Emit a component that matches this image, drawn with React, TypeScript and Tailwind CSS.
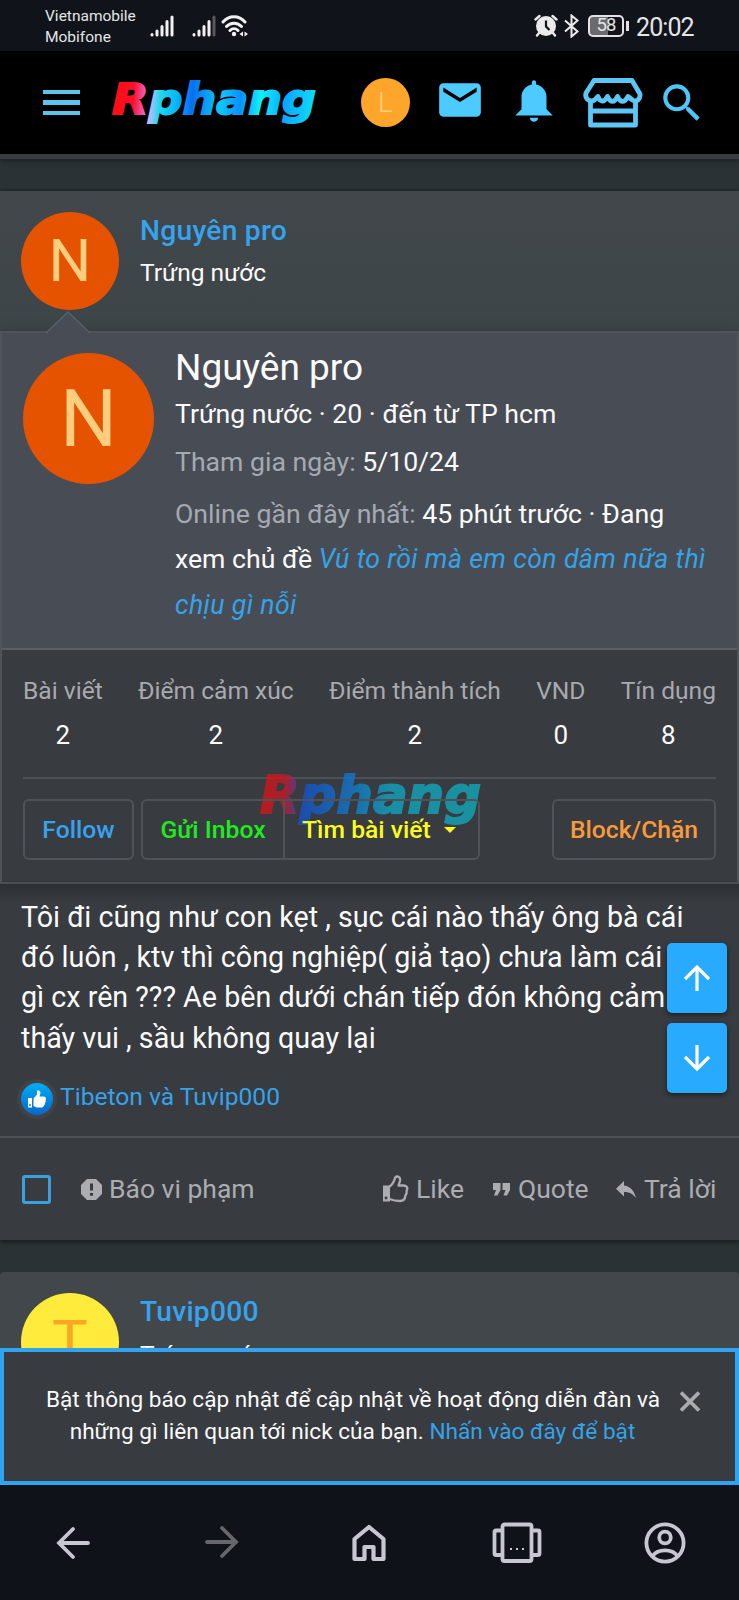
import type { ReactNode } from "react";
import { MdMail } from "react-icons/md";

const stats = [
  { label: "Bài viết", value: "2" },
  { label: "Điểm cảm xúc", value: "2" },
  { label: "Điểm thành tích", value: "2" },
  { label: "VND", value: "0" },
  { label: "Tín dụng", value: "8" },
];

function Signal({ weak }: { weak?: boolean }) {
  return (
    <svg width="24" height="22" viewBox="0 0 24 22" stroke="#f1f1f1" strokeWidth="3" strokeLinecap="round">
      <path d="M2 20V19.500M7 20V16M12 20V11.500M17 20V6.500" />
      <path d="M22 20V2" stroke={weak ? "#55585c" : "#f1f1f1"} />
    </svg>
  );
}

function StatusBar() {
  return (
    <div className="flex h-[51px] items-center bg-[#10141a] text-[#e4e5e7]">
      <div className="ml-[45px] mt-[3px] w-[105px] whitespace-nowrap text-[15.5px] leading-[21.5px]">
        <div>Vietnamobile</div>
        <div>Mobifone</div>
      </div>
      <Signal />
      <div className="ml-[18px]">
        <Signal weak />
      </div>
      <svg className="ml-[5px]" width="28" height="24" viewBox="0 0 28 24" fill="none" stroke="#f1f1f1" strokeWidth="3" strokeLinecap="round">
        <path d="M2 8C8 1 18 1 24 8M5.500 12.500C9.500 8 16.500 8 20.500 12.500M9 16.500C11.500 14 14.500 14 17 16.500" />
        <circle cx="13" cy="20" r="2.200" fill="#f1f1f1" stroke="none" />
        <path d="M22 17.500V22.500L18.500 20ZM23.500 17.500V22.500L27 20Z" fill="#f1f1f1" stroke="none" />
      </svg>
      <svg className="ml-auto" width="24" height="24" viewBox="0 0 24 24">
        <circle cx="12" cy="12" r="10" fill="#ebebeb" />
        <path d="M1.500 5.500L5.500 2M18.500 2L22.500 5.500M5 19L3 21.500M19 19L21 21.500" stroke="#ebebeb" strokeWidth="2.400" strokeLinecap="round" />
        <path d="M12 6.500V12.500L15.500 16" stroke="#10141a" strokeWidth="2.200" fill="none" />
      </svg>
      <svg className="ml-[5px]" width="17" height="24" viewBox="0 0 17 24" fill="none" stroke="#ebebeb" strokeWidth="2">
        <path d="M2 6.500L14.500 17.500L8.500 22.500V1.500L14.500 6.500L2 17.500" />
      </svg>
      <div className="ml-[8px] flex h-[22px] w-[36px] items-center justify-center rounded-[5px] border-2 border-[#e4e0e4] bg-linear-to-r from-[#6b6b6d] from-55% to-[#10141a] to-55% text-[18.5px] leading-none tracking-[-0.8px]">
        58
      </div>
      <div className="ml-[2px] h-[10px] w-[3px] bg-[#e4e0e4]" />
      <div className="ml-[7px] mr-[47px] mt-[3px] w-[56px] whitespace-nowrap text-[25px] leading-none tracking-[-0.9px]">20:02</div>
    </div>
  );
}

function SiteHeader() {
  return (
    <header className="flex h-[103px] items-center bg-black">
      <div className="ml-[43px] flex w-[37px] flex-col gap-[6px]">
        <div className="h-[4.500px] bg-[#5bc3ec]" />
        <div className="h-[4.500px] bg-[#5bc3ec]" />
        <div className="h-[4.500px] bg-[#5bc3ec]" />
      </div>
      <svg className="ml-[30px] mt-px overflow-visible" width="210" height="56" viewBox="0 0 210 56">
        <defs>
          <linearGradient id="logo" gradientUnits="userSpaceOnUse" x1="3" y1="0" x2="204" y2="14">
            <stop offset="0" stopColor="#ff0b10" />
            <stop offset="0.110" stopColor="#ff1028" />
            <stop offset="0.160" stopColor="#ee55b8" />
            <stop offset="0.190" stopColor="#c9b9ff" />
            <stop offset="0.240" stopColor="#20d8ee" />
            <stop offset="0.320" stopColor="#08b8f8" />
            <stop offset="0.400" stopColor="#0870f0" />
            <stop offset="0.540" stopColor="#10c8f8" />
            <stop offset="0.640" stopColor="#0890ff" />
            <stop offset="0.740" stopColor="#10f0f8" />
            <stop offset="0.860" stopColor="#08a8ff" />
            <stop offset="1" stopColor="#10d8f8" />
          </linearGradient>
        </defs>
        <text x="2" y="39" fill="url(#logo)" stroke="url(#logo)" strokeWidth="2" fontFamily="DejaVu Sans" fontStyle="italic" fontWeight="700" fontSize="43" textLength="204" lengthAdjust="spacingAndGlyphs">
          Rphang
        </text>
      </svg>
      <div className="ml-[41px] flex size-[49px] items-center justify-center rounded-full bg-[#fea62b] text-[28px] font-light text-[#ffd27c]">L</div>
      <MdMail className="-mt-[5px] ml-[25px] size-[50px] text-[#4dcaff]" />
      <svg className="-mt-[3px] ml-[24px] size-[50px]" viewBox="0 0 24 24" fill="#4dcaff">
        <path d="M14 20a2 2 0 0 1-4 0h4M12 2a1 1 0 0 1 1 1v1.080c2.840.48 5 2.950 5 5.920v6l3 3H3l3-3v-6c0-2.970 2.160-5.440 5-5.920V3a1 1 0 0 1 1-1Z" />
      </svg>
      <svg className="ml-[24px]" width="60" height="50" viewBox="0 0 60 50" fill="none" stroke="#5cc6f5" strokeWidth="4.800" strokeLinejoin="round">
        <path d="M11 2.500H49L57 16C57.500 21 54 24.500 49.500 22L45 18.500C41.500 25 37.500 25 34.500 18.500C31.500 25 27.500 25 24.500 18.500C21 25 17 24 15 18.500C11 24 8 23.500 5.500 22C2.500 20 2.500 17 3 15Z" />
        <path d="M7.500 22V47H52.500V22M7.500 33H52.500" />
      </svg>
      <svg className="ml-[14px] size-[50px]" viewBox="0 0 24 24" fill="#4fc6f8">
        <path d="M9.500 3A6.500 6.500 0 0 1 16 9.500c0 1.610-.59 3.090-1.560 4.230l.27.27h.79l5 5-1.500 1.500-5-5v-.79l-.27-.27A6.516 6.516 0 0 1 9.500 16a6.500 6.500 0 0 1 0-13m0 2C7 5 5 7 5 9.500S7 14 9.500 14 14 12 14 9.500 12 5 9.500 5Z" />
      </svg>
    </header>
  );
}

function ProfileCard() {
  return (
    <div className="relative h-[553px] border-2 border-[#505458] bg-[#383b40] shadow-[0_4px_14px_rgba(0,0,0,0.35)]">
      {/* pointer towards the avatar above */}
      <svg className="absolute -top-[22px] left-[43px]" width="46" height="23" viewBox="0 0 46 23">
        <path d="M1 22L23 1L45 22V23H1Z" fill="#484d55" />
        <path d="M1 22L23 1L45 22" fill="none" stroke="#596068" strokeWidth="1.500" />
      </svg>
      <div className="flex h-[317px] border-b-2 border-[#5b5f64] bg-[#484d55] pl-[21px] pt-[20px]">
        <div className="flex size-[131px] shrink-0 items-center justify-center rounded-full bg-[#e55300] text-[80px] text-[#ffcd7e]">N</div>
        <div className="ml-[21px] -mt-[9px] whitespace-nowrap text-[26.65px] text-[#fafafa]">
          <div className="h-[46px] text-[37px] leading-[48px]">Nguyên pro</div>
          <div className="h-[48px] leading-[48px]">Trứng nước · 20 · đến từ TP hcm</div>
          <div className="h-[53.5px] leading-[48px]">
            <span className="text-[#a4a9b2]">Tham gia ngày:</span> 5/10/24
          </div>
          <div className="leading-[45.5px]">
            <span className="text-[#a4a9b2]">Online gần đây nhất:</span> 45 phút trước · Đang
            <br />
            xem chủ đề <span className="italic tracking-[0.38px] text-[#36a3e8]">Vú to rồi mà em còn dâm nữa thì</span>
            <br />
            <span className="italic tracking-[0.38px] text-[#36a3e8]">chịu gì nỗi</span>
          </div>
        </div>
      </div>
      <div className="mx-[21px] flex h-[129px] justify-between border-b-2 border-[#4d5055] pt-[19px] text-center">
        {stats.map((s) => (
          <div key={s.label} className="whitespace-nowrap">
            <div className="text-[24.6px] leading-[44px] text-[#a8aaae]">{s.label}</div>
            <div className="text-[26px] leading-[44px] text-[#fafafa]">{s.value}</div>
          </div>
        ))}
      </div>
      <svg className="absolute left-[256px] top-[434px] overflow-visible" width="226" height="66" viewBox="0 0 226 66" opacity="0.800">
        <defs>
          <linearGradient id="watermark" gradientUnits="userSpaceOnUse" x1="2" y1="0" x2="222" y2="14">
            <stop offset="0" stopColor="#d81418" />
            <stop offset="0.120" stopColor="#c41a24" />
            <stop offset="0.170" stopColor="#65398a" />
            <stop offset="0.200" stopColor="#1552c8" />
            <stop offset="0.420" stopColor="#1278cc" />
            <stop offset="0.600" stopColor="#12a4c0" />
            <stop offset="1" stopColor="#12a8b8" />
          </linearGradient>
        </defs>
        <text x="2" y="46" fill="url(#watermark)" stroke="url(#watermark)" strokeWidth="2" fontFamily="DejaVu Sans" fontStyle="italic" fontWeight="700" fontSize="51" textLength="221" lengthAdjust="spacingAndGlyphs">
          Rphang
        </text>
      </svg>
      <div className="relative mx-[21px] mt-[20px] flex h-[61px] text-[24.7px] font-medium leading-[36px]">
        <div className="flex w-[111px] items-center justify-center rounded-[6px] border-2 border-[#4f5257] text-[#36a3ee]">Follow</div>
        <div className="ml-[7px] flex w-[144px] items-center justify-center rounded-l-[6px] border-2 border-[#4f5257] text-[#1fec1f]">Gửi Inbox</div>
        <div className="flex w-[195px] items-center whitespace-nowrap rounded-r-[6px] border-2 border-l-0 border-[#4f5257] pl-[17px] text-[#fcfc1c]">
          Tìm bài viết
          <span className="ml-[13px] border-x-[6px] border-t-[6px] border-x-transparent border-t-[#fcfc1c]" />
        </div>
        <div className="ml-auto flex w-[164px] items-center justify-center rounded-[6px] border-2 border-[#4f5257] text-[#f89a3c]">Block/Chặn</div>
      </div>
    </div>
  );
}

function ThumbUp({ filled }: { filled?: boolean }) {
  return filled ? (
    <svg width="20" height="20" viewBox="0 0 20 20" fill="white">
      <path d="M1 9H5V18.500H1ZM6.500 9.500L10 5.500V2C10 .5 13.500 1 13.500 4L12.500 7.500H17C19 7.500 19.500 10 18.500 11C19 12 18.800 13 18 14C18.200 15 17.500 16 17 16.500C16.500 18 15.500 18.500 14 18.500H9.500L6.500 17Z" />
      <circle cx="3" cy="16" r="0.900" fill="#087cd4" />
    </svg>
  ) : (
    <svg width="27" height="28" viewBox="0 0 27 28" fill="none" stroke="#abadb1" strokeWidth="2.300" strokeLinejoin="round">
      <path d="M7.500 11.500C10.500 9.500 12 7 13 3C14 .5 19 1 18 6L16.500 10.500H22C25.500 11 26 13.500 24.500 16C25 18 24.500 19 23.500 20.500C23 24 21.500 26 18 26C14 26 11 25.500 7.500 24" />
      <path d="M1 10.500H8V26.500H1Z" fill="#abadb1" stroke="none" />
      <circle cx="4" cy="23" r="1.400" fill="#383b40" stroke="none" />
    </svg>
  );
}

function ScrollButton({ children }: { children: ReactNode }) {
  return (
    <div className="flex h-[70px] w-[60px] items-center justify-center rounded-[5px] bg-[#28aaff] shadow-[0_2px_5px_rgba(0,0,0,0.5)]">
      <svg width="26" height="26" viewBox="0 0 26 26" fill="none" stroke="white" strokeWidth="3.200">
        {children}
      </svg>
    </div>
  );
}

function Post() {
  return (
    <article>
      <div className="flex h-[140px] bg-linear-to-b from-[#41474a] to-[#3e4549] pl-[21px] pt-[21px] shadow-[0_-1px_3px_rgba(0,0,0,0.35)]">
        <div className="flex size-[98px] items-center justify-center rounded-full bg-[#e55300] text-[60px] text-[#ffcd7e]">N</div>
        <div className="ml-[21px] whitespace-nowrap">
          <div className="text-[28.2px] font-medium leading-[38px] tracking-[0.25px] text-[#36a3ee]">Nguyên pro</div>
          <div className="mt-[2px] text-[24.5px] leading-[42px] text-[#fafafa]">Trứng nước</div>
        </div>
      </div>
      <ProfileCard />
      <div className="relative h-[356px] bg-[#383b40] shadow-[0_2px_5px_rgba(0,0,0,0.5)]">
        <div className="h-[252px] bg-linear-to-b from-[#2c2f33] to-[#383b40] to-[20px] pl-[21px] pt-[13px]">
          <div className="whitespace-nowrap text-[28.7px] leading-[40.2px] text-[#fafafa]">
            Tôi đi cũng như con kẹt , sục cái nào thấy ông bà cái
            <br />
            đó luôn , ktv thì công nghiệp( giả tạo) chưa làm cái
            <br />
            gì cx rên ??? Ae bên dưới chán tiếp đón không cảm
            <br />
            thấy vui , sầu không quay lại
          </div>
          <div className="-ml-[4px] mt-[21px] flex h-[40px] items-center text-[24.6px] text-[#36a3e8]">
            <div className="flex size-[40px] items-center justify-center rounded-full bg-[#414347]">
              <div className="flex size-[32px] items-center justify-center rounded-full bg-linear-to-b from-[#00aef6] to-[#0b66c8]">
                <ThumbUp filled />
              </div>
            </div>
            <span className="-mt-[3px] ml-[3px] whitespace-nowrap">Tibeton và Tuvip000</span>
          </div>
        </div>
        <div className="flex h-[104px] items-center border-t-2 border-[#4d5055] pl-[22px] text-[26.5px] text-[#abadb1]">
          <div className="size-[29px] rounded-[3px] border-[3px] border-[#3ba0e0]" />
          <svg className="ml-[30px]" width="21" height="21" viewBox="0 0 21 21">
            <path d="M6 0H15L21 6V15L15 21H6L0 15V6Z" fill="#abadb1" />
            <path d="M10.500 4.500V11.500M10.500 14V16.800" stroke="#383b40" strokeWidth="3" />
          </svg>
          <span className="ml-[7px] w-[150px] whitespace-nowrap">Báo vi phạm</span>
          <div className="ml-[123px]">
            <ThumbUp />
          </div>
          <span className="ml-[7px] w-[51px]">Like</span>
          <svg className="ml-[26px]" width="17" height="13" viewBox="0 0 17 13" fill="#abadb1">
            <path d="M0 0H7.500V7L4.500 12.500H1L3 7H0ZM9.500 0H17V7L14 12.500H10.500L12.500 7H9.500Z" />
          </svg>
          <span className="ml-[8px] w-[73px]">Quote</span>
          <svg className="ml-[25px]" width="20" height="17" viewBox="0 0 20 17" fill="#abadb1">
            <path d="M8 0V4.500C15 5.500 18.500 10.500 20 17C16.500 12.500 13 11 8 11V15.500L0 7.800Z" />
          </svg>
          <span className="ml-[8px] whitespace-nowrap">Trả lời</span>
        </div>
        <div className="absolute left-[667px] top-[59px] flex flex-col gap-[10px]">
          <ScrollButton>
            <path d="M13 26V2M1 14L13 2L25 14" />
          </ScrollButton>
          <ScrollButton>
            <path d="M13 0V24M1 12L13 24L25 12" />
          </ScrollButton>
        </div>
      </div>
    </article>
  );
}

function NextPost() {
  return (
    <article className="mt-[32px] flex h-[76px] overflow-hidden rounded-t-[4px] bg-[#41474a] pl-[21px] pt-[21px]">
      <div className="flex size-[98px] items-center justify-center rounded-full bg-[#ffeb3b] text-[60px] text-[#f9a825]">T</div>
      <div className="ml-[21px] whitespace-nowrap">
        <div className="text-[28.2px] font-medium leading-[38px] tracking-[0.25px] text-[#36a3ee]">Tuvip000</div>
        <div className="mt-[3px] text-[24.5px] leading-[42px] text-[#fafafa]">Trứng nước</div>
      </div>
    </article>
  );
}

function PushNotice() {
  return (
    <div className="flex h-[137px] border-4 border-[#2fa4f0] bg-[#383b40] pl-[42px] pt-[32px]">
      <div className="w-[613px] whitespace-nowrap text-center text-[22.6px] leading-[31.5px] text-[#fafafa]">
        Bật thông báo cập nhật để cập nhật về hoạt động diễn đàn và
        <br />
        những gì liên quan tới nick của bạn. <span className="text-[#36a3e8]">Nhấn vào đây để bật</span>
      </div>
      <svg className="ml-[20px] mt-[7px]" width="22" height="21" viewBox="0 0 22 21" stroke="#a9abae" strokeWidth="3.800">
        <path d="M2 1.500L20 19.500M20 1.500L2 19.500" />
      </svg>
    </div>
  );
}

function BrowserBar() {
  return (
    <nav className="grid h-[115px] grid-cols-5 justify-items-center bg-[#0f1218] pt-[37px] text-[#c6c7d0]">
      <svg width="42" height="42" viewBox="0 0 42 42" fill="none" stroke="currentColor" strokeWidth="3.800" strokeLinecap="round">
        <path d="M35 21H6M20 7L6 21L20 35" />
      </svg>
      <svg className="-mt-px" width="42" height="42" viewBox="0 0 42 42" fill="none" stroke="#66676b" strokeWidth="3.800" strokeLinecap="round">
        <path d="M6 21H35M21 7L35 21L21 35" />
      </svg>
      <svg width="42" height="42" viewBox="0 0 42 42" fill="none" stroke="currentColor" strokeWidth="4.200" strokeLinejoin="round">
        <path d="M6.500 17L21 5L35.500 17V37H25.500V25H16.500V37H6.500Z" />
      </svg>
      <svg width="50" height="42" viewBox="0 0 50 42" fill="none" stroke="currentColor" strokeWidth="3.800" strokeLinejoin="round">
        <rect x="10.500" y="2.500" width="29" height="36.500" rx="2" />
        <path d="M10 8.500H4C3 8.500 2.500 9 2.500 10V31.500C2.500 32.500 3 33 4 33H10M40 8.500H46C47 8.500 47.500 9 47.500 10V31.500C47.500 32.500 47 33 46 33H40" />
        <path d="M18 27H20M24 27H26M30 27H32" strokeWidth="2" />
      </svg>
      <svg width="42" height="42" viewBox="0 0 42 42" fill="none" stroke="currentColor" strokeWidth="3.800">
        <circle cx="21" cy="21" r="18.600" />
        <circle cx="21" cy="15.500" r="5.800" />
        <path d="M8.500 34C14 26.500 28 26.500 33.500 34" />
      </svg>
    </nav>
  );
}

export default function App() {
  return (
    <div className="h-[1600px] w-[739px] overflow-hidden bg-[#2b3235] font-['Roboto','Noto_Sans',sans-serif]">
      <StatusBar />
      <SiteHeader />
      <div className="mb-[32px] h-[5px] bg-[#3a3c40] shadow-[0_2px_5px_rgba(0,0,0,0.4)]" />
      <Post />
      <NextPost />
      <PushNotice />
      <BrowserBar />
    </div>
  );
}
